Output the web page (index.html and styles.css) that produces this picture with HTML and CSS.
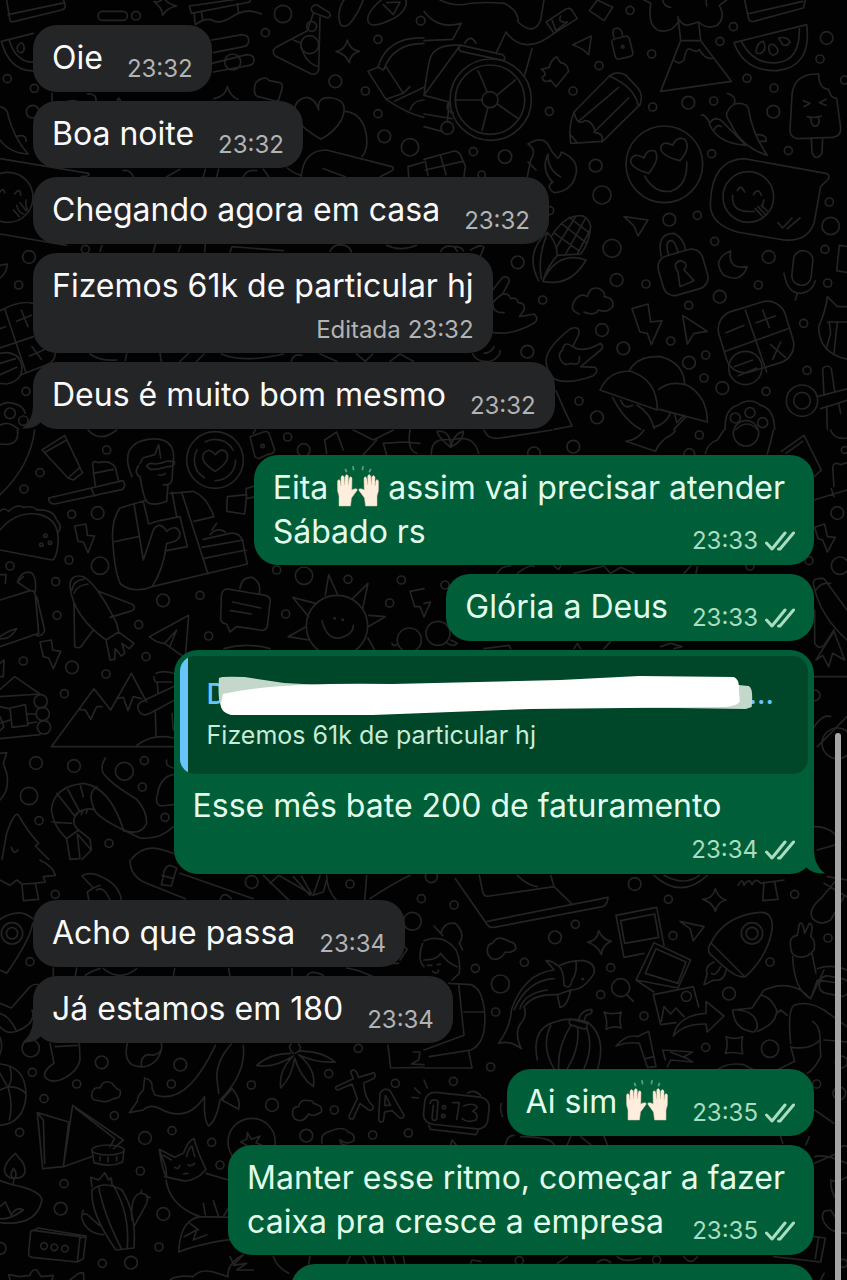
FILE: index.html
```html
<!DOCTYPE html>
<html lang="pt-BR">
<head>
    <meta charset="UTF-8">
    <meta name="viewport" content="width=device-width, initial-scale=1.0">
    <title>Conversa</title>
    <link rel="stylesheet" href="styles.css">
</head>
<body>

    <!-- shared icons -->
    <svg class="defs" aria-hidden="true">
        <symbol id="ticks" viewBox="0 0 30 20">
            <path d="M1.500 12 L7 18 L20 2 M13.500 18 L15 18 L28.500 2" fill="none" stroke="currentColor" stroke-width="3" stroke-linecap="round" stroke-linejoin="round"/>
        </symbol>
        <symbol id="hands" viewBox="0 0 42 42">
            <g id="hand" fill="#fdeedd" stroke="#e3c4a4" stroke-width=".5">
                <path d="M2 41 L2 31 Q0 26 .5 21 L.5 16 Q2 13 3.300 16 L4 21 L4 12 Q5.500 9 7.200 12 L7.600 20 L8.200 11 Q10 8 11.300 11 L11.300 20 L12.300 13 Q14 10.500 15 13 L14.800 25 L17 24 Q21 23 20 25.500 L14.500 33 L13.500 41 Z"/>
            </g>
            <use href="#hand" transform="matrix(-1 0 0 1 42 0)"/>
            <path d="M8.500 4.500 l1 2 M16 2 l.5 2.500 M26 2 l-.5 2.500 M33.500 4.500 l-1 2" stroke="#5c9a7c" stroke-width="1.800" stroke-linecap="round"/>
        </symbol>
        <symbol id="tail" viewBox="0 0 24 26">
            <path d="M11 0 C11 12 8 19 0 25.500 C7 26 14 24 18 20 L24 12 Z" fill="currentColor"/>
        </symbol>
    </svg>

    <!-- doodle wallpaper -->
    <svg class="wallpaper" viewBox="0 0 847 1280" preserveAspectRatio="xMidYMin slice" aria-hidden="true">
        <!-- top left -->
        <g transform="scale(.33333)">
            <path d="M20 0 L30 62 Q34 68 44 64 L185 30 Q200 26 194 10 L190 0 M24 44 L194 8"/>
            <rect x="294" y="34" width="88" height="27" rx="13"/>
            <path d="M462 5 Q484 10 490 -10 Q500 12 530 18 Q500 24 488 46 Q486 22 462 5 Z"/>
            <path d="M568 18 L750 -8 L750 6 L574 40 Z M582 38 L586 74 M604 34 L608 62 M712 10 L716 40 M586 74 Q620 50 640 62 T700 48 T784 42"/>
            <path d="M936 22 Q944 10 956 18 L988 38 Q996 48 984 54 L940 38 Q930 30 936 22 Z M940 40 L922 92 L828 142 Q812 152 826 168 L934 222 Q952 226 956 208 L960 52 M880 120 L904 130 M904 140 Q916 190 956 200"/>
            <circle cx="935" cy="79" r="15"/><circle cx="929" cy="134" r="27"/>
            <path d="M1018 62 Q1012 20 1040 -10 M1090 0 Q1070 50 1046 74 Q1022 88 1018 62 M1105 66 Q1094 40 1150 -6 M1105 66 Q1116 90 1190 50 Q1224 26 1218 0 M1160 8 L1200 6 L1180 44 L1150 14"/>
            <path d="M1008 154 Q1034 152 1042 120 Q1050 150 1078 154 Q1050 162 1048 188 Q1038 162 1008 154 Z"/>
            <path d="M1134 202 Q1160 110 1272 114 M1152 206 Q1180 130 1272 130 M1104 214 L1134 202 L1150 210 L1158 200 L1210 280 M1104 214 L1158 298 L1210 280 L1230 260 M1158 298 Q1220 340 1272 352 M1230 330 Q1240 300 1272 300 M1184 304 L1272 262"/>
            <path d="M4 124 L100 100 M4 124 Q30 220 110 212 M28 122 Q50 190 104 186"/>
            <path d="M52 140 Q62 124 68 130 Q78 146 66 158 Q48 158 52 140 Z"/>
            <path d="M636 120 L726 104 Q748 106 746 124 Q744 138 730 140 L640 158 M636 190 L740 164 Q762 164 762 180 Q762 194 748 196 L640 216"/>
            <circle cx="698" cy="186" r="24"/>
            <path d="M766 250 Q776 238 786 236 Q800 230 808 242 L840 248 Q850 252 846 266 L836 300 Q826 306 816 300 L774 290 Q758 286 766 250 Z"/>
            <path d="M642 296 Q676 290 682 260 Q692 290 714 298 M156 280 L156 306 M190 306 L220 302 L250 308 M350 306 L356 294 L364 306 M262 282 Q290 280 288 302"/>
            <path d="M956 330 Q950 286 998 294 Q1050 304 1024 360 Q1004 396 962 418 Q900 380 884 350 Q876 300 920 292 Q946 296 956 330 Z"/>
            <path d="M1036 334 Q1090 340 1100 410 Q1104 450 1086 470 M904 530 Q910 450 980 450 L1176 500 Q1184 506 1176 512 L1140 530 M970 506 L1036 530 M862 504 Q880 520 904 526 M1226 530 L1224 500 L1272 486"/>
            <path d="M0 320 Q24 326 24 346 Q40 410 84 462 Q30 460 0 420 M48 410 Q80 400 78 424"/>
            <path d="M0 476 L266 520 Q270 524 262 528 L244 530 M0 576 Q10 560 14 578 M44 582 Q60 560 62 586 M50 616 Q56 640 72 642 M60 608 L78 632 M40 630 Q50 640 58 650 M78 600 Q76 620 82 630 M0 702 L200 736"/>
            <circle cx="24" cy="592" r="75"/>
            <path d="M0 796 L22 792 Q20 820 0 834 M0 932 Q60 900 98 910 M14 926 L78 1118 M0 986 L16 980 M0 1044 L100 1010 M50 964 L94 946 M64 930 L84 980 M88 1068 L136 1048 M96 1040 L124 1078 M64 1124 L140 1094 Q164 1086 166 1060"/>
            <path d="M0 1060 Q50 1050 64 1090 Q74 1140 20 1152 L0 1150 M0 1090 L46 1076 M0 1124 L50 1102"/>
            <path d="M300 754 L306 736 M460 756 L466 734 M536 754 L542 736 M616 734 L614 756 M690 756 L696 740 L850 752 M990 754 Q1000 734 1020 734 Q1050 736 1054 756 M1160 736 Q1200 756 1250 736 M500 530 L540 508 M370 512 Q390 508 400 530 M610 530 L616 508 M650 530 L656 508 M730 530 Q740 508 770 512 M790 508 L806 530"/>
            <path d="M270 1062 Q300 1084 350 1080 M380 1062 L376 1082 M480 1060 L484 1084 M540 1084 L566 1060 M590 1084 L612 1062 M664 1062 Q730 1090 850 1062 M874 1084 Q880 1060 906 1066 M960 1062 L1010 1084 M1070 1062 L1096 1084 L1118 1062 M1170 1084 L1200 1062 L1240 1084"/>
            <circle cx="408" cy="47" r="13"/><circle cx="849" cy="42" r="26"/><circle cx="796" cy="98" r="12"/><circle cx="1134" cy="118" r="12"/><circle cx="1006" cy="244" r="19"/><circle cx="1096" cy="273" r="12"/><circle cx="1134" cy="341" r="12"/><circle cx="1153" cy="409" r="19"/><circle cx="1230" cy="442" r="26"/><circle cx="22" cy="236" r="12"/><circle cx="103" cy="265" r="12"/><circle cx="98" cy="335" r="19"/><circle cx="87" cy="771" r="19"/><circle cx="256" cy="748" r="12"/><circle cx="56" cy="855" r="12"/><circle cx="78" cy="1174" r="12"/><circle cx="30" cy="1240" r="16"/><circle cx="70" cy="1262" r="14"/><circle cx="1262" cy="62" r="13"/>
            <path d="M0 1216 Q16 1204 40 1210 Q70 1216 76 1240 M0 1276 Q24 1260 56 1288"/>
        </g>

        <!-- top right -->
        <g transform="translate(424) scale(.33333)">
            <path d="M0 34 Q40 90 112 70 L86 118 L0 122 M48 0 Q90 20 130 12 T240 10 Q284 30 282 66 Q330 110 350 60 L360 0 M366 66 L428 26 Q440 22 446 34 L460 56 L390 100 Z M384 60 L396 92 L430 66 Q400 70 410 48"/>
            <path d="M216 160 L246 96 Q300 170 390 100 M324 146 L302 226 M0 286 Q10 200 20 170 Q40 130 112 136 L236 164 Q246 172 240 182 L110 154 Q100 146 110 134 Z M122 130 Q140 100 156 130"/>
            <circle cx="200" cy="299" r="122"/><circle cx="198" cy="299" r="104"/><circle cx="198" cy="299" r="24"/>
            <path d="M162 212 L190 276 M274 240 L218 286 M94 300 L174 300 M280 354 L220 312 M174 392 L192 322 M0 286 L76 306 L70 364 M0 342 L84 356 M0 380 L54 394 M74 306 Q60 330 88 340"/>
            <circle cx="70" cy="384" r="19"/>
            <path d="M520 0 L566 22 L540 62 L496 32 Z M446 134 L502 108 L494 164 Q480 146 446 134 Z"/>
            <rect x="568" y="112" width="54" height="62" rx="10" transform="rotate(-14 595 143)"/>
            <path d="M570 112 Q560 84 580 84 Q594 86 596 108"/><circle cx="596" cy="140" r="4"/>
            <path d="M352 208 L376 202 Q380 180 398 170 L410 188 Q430 190 434 214 L396 260 L380 240 Q360 252 354 232 Q374 222 352 208 Z"/>
            <path d="M450 336 L556 228 Q580 210 606 226 L640 262 Q660 286 648 314 L536 424 L440 430 Q432 380 450 336 Z M556 228 Q630 260 642 314 M584 262 L466 362 M614 294 L510 396 M450 336 Q460 380 482 362 Q506 360 514 398 Q540 400 534 424 M438 404 Q454 420 460 430"/>
            <path d="M660 0 L680 10 Q670 80 706 92 Q746 100 766 60 Q780 80 796 74 L824 66 Q850 90 880 76 Q906 50 886 16 L908 0 M716 0 Q720 20 740 22 M846 0 L848 18 M762 50 L770 122 L830 122 L824 66 M770 122 L710 274 L922 244 L830 122 M752 182 Q764 196 780 180 Q786 140 800 148 Q820 160 826 148 Q840 176 864 176"/>
            <path d="M962 0 L974 58 Q978 66 990 64 L1138 24 L1144 0 M970 42 L1136 4"/>
            <path d="M930 128 L1148 74 Q1164 200 1060 212 Q960 214 930 128 Z M952 124 Q990 196 1060 188 Q1130 180 1126 80 M996 154 Q1000 126 1018 124 Q1030 150 1010 160 Q996 162 996 154 Z M1036 136 Q1030 158 1048 166 Q1066 160 1060 146 Q1048 126 1036 136 Z M1064 114 Q1090 108 1098 126 Q1090 140 1076 134 Z"/>
            <path d="M1184 222 Q1110 220 1104 284 L1098 390 Q1098 412 1120 416 L1226 412 Q1252 408 1250 384 L1238 294 Q1220 296 1214 268 Q1184 266 1184 222 Z M1162 418 L1164 458 Q1176 486 1194 460 L1196 418 M1138 302 L1158 310 L1140 320 M1206 298 L1186 308 L1206 316 M1150 350 Q1170 356 1192 348 M1160 354 Q1162 382 1178 378 Q1188 372 1184 352"/>
            <path d="M930 312 Q940 290 910 280 M908 340 Q920 310 944 310 Q970 310 974 328 Q984 400 1030 466 Q950 440 920 370 Q906 350 908 340 Z M856 366 Q840 340 832 346 M856 372 Q866 350 890 360 Q910 380 966 436 Q880 430 856 372 Z M870 390 Q880 370 892 380 M1000 404 Q1030 404 1026 424 L1004 424"/>
            <circle cx="721" cy="493" r="115"/>
            <path d="M674 520 Q620 504 620 482 Q628 454 660 474 Q670 444 694 454 Q708 480 674 520 Z M768 482 Q712 468 710 444 Q714 420 746 436 Q756 408 782 418 Q802 444 768 482 Z M662 528 Q690 580 740 574 Q792 556 788 486"/>
            <path d="M312 432 Q350 408 370 430 Q382 456 400 474 Q408 474 412 456 Q470 480 454 530 Q440 574 390 578 Q364 560 386 546 Q350 510 372 462 Q370 510 410 530 M312 432 Q340 450 320 480 L310 530 M312 486 L336 510"/>
            <path d="M0 478 L80 456 Q100 448 110 466 L124 498 L120 530 M50 468 L66 524 M4 510 L116 484 M4 484 L12 526"/>
            <path d="M960 476 L1206 520 Q1222 526 1210 540 L1190 560 L1170 670 Q1150 726 1080 720 L940 696 Q850 670 860 600 Q866 480 960 476 Z M940 572 Q950 550 962 576 M988 584 Q1004 560 1012 586 M926 586 Q920 640 990 634 M1020 600 L1014 620 M994 626 L1016 650 M1002 620 L1024 644 M1012 616 L1032 636 M1062 668 L1076 684 L1104 654 M1090 686 L1128 654"/>
            <circle cx="973" cy="591" r="76"/>
            <path d="M344 842 Q300 760 370 696 Q400 730 400 766 Q370 800 356 844 Q440 862 486 780 Q400 750 356 844 M370 700 Q340 770 352 836 M400 766 L470 762 Q496 730 500 680 Q490 640 460 648 Q420 650 384 706 M392 700 L464 752 M412 670 L486 728 M436 652 L498 700 M456 648 L396 744 M484 656 L426 760 M498 690 L460 762"/>
            <path d="M600 650 L672 660 L642 708 L630 678 Z M712 770 Q696 700 750 700 Q780 716 784 748 M734 764 Q720 720 744 722 Q754 726 762 756"/>
            <rect x="708" y="756" width="138" height="122" rx="34" transform="rotate(-16 777 817)"/>
            <path d="M762 816 L768 860 L810 842 L780 810 Q796 788 768 782 Q744 790 762 816 Z M920 752 Q860 780 900 826 Q950 852 970 800 Q910 810 920 752 Z"/>
            <rect x="1106" y="752" width="58" height="104" rx="28" transform="rotate(6 1135 804)"/>
            <path d="M1080 820 Q1090 880 1130 880 Q1166 876 1174 842 M1120 880 L1114 900 M1272 740 L1246 736 L1238 812 L1272 818"/>
            <path d="M1210 890 L1240 920 L1272 920 M1210 890 Q1206 930 1184 980 Q1184 1060 1272 1078 M1210 966 L1272 966 M1216 970 L1220 1000 L1208 1040 M1240 966 L1230 1060"/>
            <path d="M50 754 Q60 734 90 740 Q110 738 118 752 M90 740 L100 754 M140 750 Q170 730 180 742 L170 766 M206 870 L236 832 Q256 826 256 844 L236 882 Q210 900 206 910 Q206 940 240 938 M236 882 Q256 880 260 896 Q280 890 282 908 Q306 908 300 930 L286 950 L330 942 Q346 956 332 968 Q260 1010 200 996"/>
            <path d="M466 942 Q430 930 456 896 Q472 878 490 890 Q500 854 530 868 Q546 880 540 890 Q572 894 566 920 Q550 940 524 930 Q510 950 480 936"/>
            <path d="M624 926 L672 912 L680 966 L714 962 L682 1034 L670 1000 L648 996 Z M776 946 L850 994 L810 1000 L790 1032 Z"/>
            <path d="M366 1080 Q370 1040 440 986 Q470 976 464 1004 L446 1040 Q480 1060 530 1030 Q542 1040 530 1050 L470 1100 L514 1102 Q526 1116 506 1128 Q430 1156 390 1136 Q366 1110 366 1080 Z M446 1040 Q420 1020 416 1050 Q400 1060 410 1080 Q420 1100 440 1090 Q470 1100 466 1070"/>
            <rect x="892" y="916" width="208" height="190" rx="56" transform="rotate(-17 996 1011)"/>
            <path d="M964 930 L1028 1116 M904 1054 L1092 986 M906 998 L960 976 M996 968 L1054 948 M1016 930 L1036 982 M1040 1034 L1084 1072 M1046 1078 L1070 1026"/>
            <circle cx="964" cy="1104" r="50"/><path d="M930 1100 L986 1080 M942 1128 L998 1104"/>
            <path d="M528 1170 Q556 1110 620 1114 Q700 1140 700 1230 Z M616 1112 Q640 1066 710 1070 Q780 1090 782 1152 M704 1168 Q740 1140 790 1156 Q850 1190 850 1266 L706 1228 M566 1192 Q600 1260 650 1288 M590 1200 Q600 1230 626 1216 M640 1216 Q680 1240 690 1286 M740 1236 Q730 1270 690 1282 M786 1250 L750 1288 M752 1240 L758 1268 L780 1246"/>
            <path d="M904 1288 Q900 1230 940 1216 Q980 1190 1010 1216 Q1050 1226 1052 1288 M936 1288 Q970 1256 1000 1288"/>
            <circle cx="934" cy="1254" r="15"/><circle cx="978" cy="1238" r="15"/><circle cx="1016" cy="1268" r="15"/>
            <circle cx="1134" cy="1202" r="47"/><circle cx="1134" cy="1202" r="25"/>
            <path d="M1180 1190 L1272 1166 M1190 1226 L1272 1200 M1200 1186 L1196 1106 Q1210 1090 1222 1106 L1232 1176 M1208 1220 L1210 1288 M1244 1210 L1250 1240 M396 1172 Q420 1230 444 1278 L390 1288 M146 1062 Q160 1090 200 1084 Q230 1070 228 1052 M180 1060 Q200 1060 210 1040"/>
            <circle cx="618" cy="31" r="12"/><circle cx="683" cy="162" r="12"/><circle cx="525" cy="197" r="12"/><circle cx="447" cy="273" r="12"/><circle cx="376" cy="334" r="12"/><circle cx="148" cy="455" r="12"/><circle cx="243" cy="470" r="20"/><circle cx="173" cy="524" r="11"/><circle cx="515" cy="497" r="19"/><circle cx="534" cy="585" r="27"/><circle cx="686" cy="321" r="12"/><circle cx="793" cy="308" r="19"/><circle cx="869" cy="303" r="12"/><circle cx="928" cy="80" r="12"/><circle cx="888" cy="124" r="12"/><circle cx="969" cy="235" r="12"/><circle cx="1050" cy="264" r="12"/><circle cx="1048" cy="335" r="19"/><circle cx="1208" cy="114" r="19"/><circle cx="1188" cy="177" r="12"/><circle cx="1093" cy="452" r="12"/><circle cx="863" cy="461" r="12"/><circle cx="1262" cy="240" r="12"/><circle cx="1216" cy="606" r="12"/><circle cx="1220" cy="678" r="26"/><circle cx="1203" cy="748" r="12"/><circle cx="1034" cy="771" r="19"/><circle cx="872" cy="724" r="12"/><circle cx="820" cy="646" r="12"/><circle cx="736" cy="659" r="19"/><circle cx="564" cy="745" r="27"/><circle cx="377" cy="632" r="12"/><circle cx="281" cy="787" r="19"/><circle cx="578" cy="840" r="19"/><circle cx="666" cy="852" r="12"/><circle cx="356" cy="900" r="12"/><circle cx="534" cy="990" r="19"/><circle cx="598" cy="1045" r="19"/><circle cx="310" cy="1055" r="19"/><circle cx="794" cy="916" r="12"/><circle cx="887" cy="890" r="19"/><circle cx="1003" cy="855" r="12"/><circle cx="1211" cy="849" r="12"/><circle cx="740" cy="1023" r="12"/><circle cx="795" cy="1088" r="19"/><circle cx="845" cy="1065" r="12"/><circle cx="840" cy="1134" r="12"/><circle cx="895" cy="1164" r="19"/><circle cx="1026" cy="1174" r="12"/><circle cx="1149" cy="1111" r="12"/><circle cx="1139" cy="970" r="12"/><circle cx="465" cy="1203" r="12"/><circle cx="519" cy="1252" r="19"/>
        </g>

        <!-- middle left -->
        <g transform="translate(0 430) scale(.33333)">
            <path d="M0 42 Q60 50 52 0 M104 0 Q90 110 0 194 M264 0 Q300 40 350 0 M126 60 L194 16 L240 112 L204 144 Z M136 66 L200 30 M204 144 L220 150 L248 128 L238 112"/>
            <path d="M146 204 L368 152 Q380 164 368 178 L164 222 Q146 222 146 204 Z M274 176 L284 198 M286 168 L278 104 Q276 90 296 98 Q330 90 346 112 L356 154 M280 130 L340 118"/>
            <path d="M396 140 Q360 60 420 34 Q490 14 514 50 Q524 70 520 90 L516 150 Q510 168 490 164 M416 106 Q400 130 420 140 Q430 200 440 216 Q460 230 500 214 L504 166 M420 100 L428 84 L464 74 L476 44 L482 84 M440 108 Q446 96 466 102 L490 98 Q500 90 524 96 Q524 112 500 110 Q470 120 450 118 Z M476 134 Q488 138 496 130"/>
            <path d="M440 210 L360 234 Q334 270 338 330 Q344 430 362 462 Q400 492 456 470 L742 402 L728 334 Q720 306 690 310 L610 328 M510 190 L580 184 Q620 200 642 260 L582 274 M338 336 L416 320 M402 222 L430 390 L460 300 Q480 270 500 304 Q530 280 540 310 Q540 336 500 340 Q490 420 456 470 M480 272 L540 260 L562 350 L500 362 M516 186 L530 260 M430 214 L446 282 L484 270 M546 190 L624 432 M606 352 L730 330 M608 386 L738 360 M630 314 Q650 290 676 306 M636 300 L650 280"/>
            <circle cx="645" cy="90" r="85"/><circle cx="645" cy="90" r="62" stroke-dasharray="96 34"/>
            <path d="M645 124 Q600 96 610 72 Q626 50 646 74 Q668 48 682 72 Q688 98 645 124 Z"/>
            <path d="M750 20 L790 6 Q806 0 810 18 L824 60 Q820 74 800 74 L776 86 Q764 84 762 70 Z M760 10 L766 0 M980 70 L974 30 L1010 6 L1030 60 M1060 0 L1120 30 L1180 0 M1160 74 L1150 40 L1210 36 L1260 40 M1090 74 L1130 30 M1230 0 Q1220 60 1250 70"/><circle cx="788" cy="48" r="5"/>
            <path d="M738 176 L772 166 M738 176 L740 206 L766 200 M682 200 L740 194 L734 252 L680 244 Z"/>
            <path d="M0 300 Q50 240 120 254 Q180 270 174 340 Q170 386 156 390 L0 360 M0 244 Q10 230 26 244 Q50 220 70 232 Q100 226 110 240 Q160 236 170 270 Q190 290 172 310"/>
            <circle cx="136" cy="317" r="5"/><circle cx="124" cy="344" r="5"/><circle cx="150" cy="338" r="5"/>
            <path d="M224 288 L258 282 L262 316 L284 318 L264 368 L250 336 L234 334 Z M120 636 L154 630 L158 660 L182 664 L160 716 L146 684 L130 680 Z"/>
            <path d="M0 434 L18 434 L16 460 M0 510 L90 482 Q104 480 106 496 L116 610 L0 650 M90 482 L52 456 Q66 420 94 428 Q110 440 106 484 M110 500 L134 600 Q130 620 110 616 M52 456 L70 440 M0 626 Q30 630 50 596 Q30 600 0 620"/>
            <path d="M210 470 Q210 430 250 440 Q290 460 350 580 L356 606 L318 630 Q220 560 210 470 Z M216 480 Q220 450 252 448 M222 490 Q230 466 264 462 M296 484 L400 524 Q410 540 390 544 L330 562 M222 520 L224 650 Q240 660 250 640 L280 600 M318 630 L330 690 L344 688 L346 656 L364 678 L374 670 L366 640 L388 656 L402 640 L356 606"/>
            <path d="M448 620 L566 556 L556 684 L494 640 Q470 640 448 620 Z M494 640 L530 600 L510 648 M664 516 Q660 470 690 478 L796 496 Q814 500 810 520 L802 590 Q796 604 780 600 L710 590 L690 606 L680 582 Q660 580 662 560 Z M720 476 Q724 440 756 442 Q784 456 778 490 M698 516 L782 534 M692 542 L754 552"/>
            <circle cx="1011" cy="588" r="92"/>
            <path d="M976 496 L986 434 L1012 492 M1058 506 L1104 460 L1088 536 M1106 556 L1156 560 L1104 590 M1104 624 L1124 660 M946 520 L878 502 L926 560 M918 590 L864 620 L926 630 M966 572 Q980 630 1020 624 Q1060 614 1060 586"/>
            <circle cx="1004" cy="565" r="2"/><circle cx="1028" cy="569" r="2"/><circle cx="1228" cy="630" r="36"/>
            <path d="M1230 484 L1272 476 M1230 484 L1244 530 L1260 530 L1272 560 M1176 640 Q1180 650 1190 644 M672 656 Q740 636 810 656"/>
            <path d="M0 700 L12 690 L10 740 L0 740 M0 778 L44 740 L120 792 L0 800 M30 834 L76 824 L84 886 L36 892 Z M0 830 L26 836 M80 852 L104 852 M0 880 L30 870 M84 880 L110 876 M0 926 L120 914 M0 902 L12 890 L0 860"/>
            <circle cx="122" cy="814" r="20"/><circle cx="128" cy="852" r="20"/><circle cx="132" cy="892" r="20"/>
            <path d="M154 950 L282 776 L332 840 L394 730 L440 816 M154 950 L520 950 M236 838 L256 840 L272 868 L290 830 L306 830 M350 806 L370 802 L384 842 L400 800 L424 806 M410 946 Q460 910 520 924 M468 918 L466 846 M516 850 L520 900 M414 836 Q410 820 430 812 L520 770 M414 836 Q424 864 450 850 L520 812 M468 730 Q490 720 520 730 M468 756 L516 756 M472 760 L474 790 M462 740 Q462 756 472 758"/>
            <path d="M0 970 L20 968 L10 1000 L20 1030 Q30 1080 0 1110 M316 984 Q300 1010 310 1030 Q330 1060 410 1108 Q440 1140 440 1180 Q420 1220 370 1200 Q290 1160 284 1140 M520 1190 Q480 1230 420 1224 L370 1200"/>
            <path d="M372 1204 Q330 1070 250 1060 Q160 1070 154 1140 Q160 1190 200 1226 L236 1200 Q210 1180 230 1150 Q260 1130 284 1140 M170 1090 L226 1160 M200 1072 L240 1146 M240 1062 L250 1100 M290 1070 Q260 1090 284 1140 M156 1176 L214 1180 M200 1226 L210 1288 L240 1286 L232 1212 L274 1260 L246 1288 M236 1200 L270 1228 L274 1260 M236 1146 L228 1156 M248 1142 L244 1154 M262 1140 L258 1150"/>
            <path d="M472 1096 Q480 1040 520 1034 M470 1100 Q466 1126 486 1128 L520 1124 M500 990 Q496 1010 520 1014 M6 1288 L20 1210 Q44 1140 56 1156 Q80 1200 116 1240 L106 1248 L146 1288 M34 1252 Q42 1276 54 1260 M394 1288 Q430 1240 490 1260 L520 1270"/>
            <circle cx="320" cy="60" r="12"/><circle cx="120" cy="128" r="12"/><circle cx="72" cy="177" r="12"/><circle cx="215" cy="253" r="12"/><circle cx="293" cy="249" r="19"/><circle cx="207" cy="390" r="12"/><circle cx="300" cy="407" r="26"/><circle cx="30" cy="408" r="12"/><circle cx="167" cy="455" r="12"/><circle cx="171" cy="556" r="12"/><circle cx="489" cy="511" r="19"/><circle cx="600" cy="496" r="12"/><circle cx="416" cy="584" r="12"/><circle cx="626" cy="618" r="12"/><circle cx="438" cy="680" r="12"/><circle cx="216" cy="712" r="19"/><circle cx="70" cy="693" r="12"/><circle cx="318" cy="732" r="12"/><circle cx="193" cy="791" r="12"/><circle cx="108" cy="999" r="19"/><circle cx="222" cy="1008" r="19"/><circle cx="373" cy="1024" r="27"/><circle cx="433" cy="992" r="12"/><circle cx="427" cy="1071" r="12"/><circle cx="87" cy="1098" r="26"/><circle cx="117" cy="1172" r="12"/><circle cx="495" cy="1162" r="12"/><circle cx="327" cy="1240" r="12"/><circle cx="863" cy="21" r="12"/><circle cx="911" cy="60" r="19"/><circle cx="830" cy="420" r="12"/><circle cx="912" cy="437" r="26"/><circle cx="1044" cy="448" r="12"/><circle cx="1204" cy="450" r="12"/><circle cx="1169" cy="519" r="12"/><circle cx="857" cy="552" r="12"/>
        </g>

        <!-- middle right -->
        <g transform="translate(424 430) scale(.33333)">
            <path d="M22 74 Q20 20 80 30 Q150 10 164 70 M80 52 Q40 20 40 4 Q80 0 80 52 Q90 10 118 4 Q120 30 80 52 M180 0 Q190 30 230 24 L384 0 M606 34 Q640 30 660 0 M606 34 L694 64 Q710 30 740 16 Q760 0 750 0 M844 70 Q850 40 880 30 L900 0 M1048 0 Q1040 40 1030 72 M1072 64 L1140 16 L1192 120 L1160 150 M1086 70 L1136 34 M1220 0 Q1230 30 1269 24"/>
            <circle cx="966" cy="10" r="38"/>
            <path d="M1170 210 L1269 180 M1222 176 L1230 200 M1230 170 L1226 110 Q1230 94 1250 104 L1269 98 M1172 292 L1202 282 L1210 320 L1234 322 L1210 366 L1196 330 L1182 326 Z M1170 470 Q1160 440 1200 446 L1269 540 M1170 470 Q1190 560 1269 630 M1172 540 L1172 640 Q1184 660 1200 646 L1230 600 M1176 480 Q1190 456 1220 460"/>
            <path d="M220 430 Q230 408 260 408 M280 430 Q320 400 330 410 M390 408 L404 418 L410 408 M450 430 L540 408 L560 430 L590 412 L630 430 M780 430 L800 408 M820 410 L816 430 M0 520 L20 516 L0 560 M80 630 L100 640 Q90 652 70 640 M180 656 L256 646 L260 656 M450 656 L460 640 L470 656 M540 656 L560 634 M710 650 L740 640 L774 650 L750 656"/>
            <circle cx="42" cy="610" r="36"/><circle cx="63" cy="465" r="12"/><circle cx="448" cy="50" r="19"/><circle cx="330" cy="70" r="19"/><circle cx="826" cy="15" r="12"/><circle cx="796" cy="72" r="16"/><circle cx="1240" cy="249" r="19"/><circle cx="1155" cy="392" r="12"/><circle cx="1248" cy="407" r="26"/><circle cx="978" cy="408" r="12"/><circle cx="1262" cy="60" r="10"/>
            <path d="M1176 690 L1230 604 L1262 690 L1226 670 L1214 710 L1196 676 Z M1172 740 L1269 740 M1160 910 Q1190 850 1220 860 M1180 950 L1269 860 M1170 1190 Q1230 1190 1250 1240 L1180 1260"/>
            <circle cx="1172" cy="796" r="16"/><circle cx="1240" cy="940" r="46"/>
        </g>

        <!-- bottom left -->
        <g transform="translate(0 860) scale(.33333)">
            <path d="M0 60 L30 76 L50 60 L66 72 L100 70 L136 66 L130 50 L166 46 Q160 20 120 0 M66 72 L70 122 L116 118 L106 70 M246 48 Q260 36 290 44 Q360 70 364 122 M246 48 L280 84 L262 96 L266 118 M290 90 Q310 76 330 120 M280 84 L300 76"/>
            <path d="M390 0 Q390 50 440 70 L556 116 M540 40 L760 116 M490 50 Q490 20 510 16 L530 24 L514 78 L484 74 Z M486 46 L520 56 M660 120 Q670 90 694 116 M790 46 L870 124 M810 70 L836 46 L940 106 L960 46 M880 50 L930 106 M904 48 L936 104 M980 46 Q980 90 1010 122 M1094 120 L1100 46 M1110 116 Q1180 70 1230 46 M940 106 L970 96 L980 60"/>
            <path d="M0 178 Q60 140 98 176 M98 190 Q90 240 20 340 L0 330"/><circle cx="36" cy="220" r="32"/><circle cx="36" cy="220" r="17"/>
            <path d="M1200 300 L1222 268 L1204 250 M1176 310 L1196 310 M1268 250 Q1250 300 1272 320 M160 324 L160 350 M230 324 L226 350 M256 346 Q280 330 300 326 M310 326 Q360 366 410 326 M524 326 L520 350 M686 326 L690 350 M876 326 L876 350 M920 350 Q930 326 970 346 M1040 324 L1076 332 L1120 350"/>
            <path d="M0 430 L34 444 L90 380 Q104 370 114 374 M0 460 Q30 470 50 514 Q20 524 0 500 M50 514 Q110 490 96 450 M0 532 Q10 560 0 582"/><circle cx="92" cy="565" r="26"/>
            <path d="M150 550 L162 610 Q130 630 134 650 Q150 670 180 660 Q230 640 240 600 L238 550 M166 560 L232 556 M382 550 Q370 600 400 616 Q440 630 470 600 Q490 570 484 550 M424 618 Q420 590 444 584 Q470 590 484 570"/>
            <path d="M646 556 Q560 740 464 704 L456 684 Q460 660 434 654 L430 690 Q410 710 412 724 L388 758 L430 750 Q450 730 480 746 Q560 790 614 710 Q610 780 626 798 Q650 780 660 720 Q740 640 730 556 M694 552 Q650 600 650 650 L656 700 M696 686 L666 720 L716 748 Q724 716 696 686 Z"/>
            <path d="M880 580 Q860 560 874 552 M896 552 Q910 570 886 580 M872 580 Q810 580 770 616 Q820 626 880 588 Q836 630 842 684 Q876 650 884 594 Q900 650 940 680 Q950 630 896 584 Q950 610 1006 606 Q960 570 894 574"/>
            <path d="M1008 680 L1060 656 L1052 636 Q1058 624 1068 634 L1076 652 L1122 638 Q1130 648 1120 656 L1092 668 Q1090 710 1120 740 Q1120 754 1106 750 L1080 730 L1060 776 Q1046 780 1048 766 L1072 716 L1056 672 L1014 690 Q1004 688 1008 680 Z M1136 776 L1140 700 Q1150 680 1170 692 L1212 766 Q1212 776 1200 774 L1176 752 L1154 756 L1150 784 Q1136 790 1136 776 Z M1154 736 L1156 706 L1172 736 Z M1164 556 L1172 624 L1272 622 M1240 576 L1260 576 L1256 600 L1234 612 L1272 614 M1236 712 L1256 714 M1244 684 L1260 700"/>
            <path d="M0 612 Q80 620 78 710 Q70 790 0 796 M30 622 Q40 660 24 680 L0 690 M24 680 Q60 680 76 700 M24 680 Q40 730 28 780 M0 640 L20 676"/>
            <path d="M112 758 L206 786 L190 920 L128 926 Z M112 758 L130 780 L134 910 M218 736 L370 840 L340 866 M218 736 L190 920 L280 888 M226 744 L344 836 L330 860"/>
            <ellipse cx="324" cy="870" rx="48" ry="15"/><path d="M276 872 L282 908 Q330 924 368 906 L372 870 M300 890 L300 902 M324 892 L324 906 M350 890 L350 902"/>
            <path d="M276 700 Q280 680 300 684 Q310 656 336 670 Q350 690 360 690 Q366 716 340 716 Q320 730 300 722 Q270 724 276 700 Z M878 754 Q880 740 896 740 Q900 716 924 722 Q940 720 940 730 Q970 736 964 756 Q940 772 926 762 Q910 790 886 778 Q876 770 878 754 Z M966 850 Q960 820 990 814 Q1030 796 1044 816 Q1066 820 1062 842 Q1040 856 1020 840 Q1020 856 1040 856"/>
            <circle cx="755" cy="846" r="71"/><path d="M742 818 L754 838 L780 828 L768 848 L786 856 M742 818 L740 838 L722 846 L740 856"/>
            <path d="M478 868 Q486 930 500 952 L498 924 L478 868 L524 892 L550 880 Q566 840 582 836 Q590 870 618 928 L600 946 Q570 966 548 962 L494 950 M560 890 Q566 862 576 858 L584 890 M490 886 L514 900 M524 922 Q536 930 540 916 M564 914 Q572 922 584 910 M550 942 L564 940 M498 960 Q510 1040 600 1070 L706 1072 M618 940 L706 966 M610 1030 L616 1064 M640 1022 L656 1070 M700 1020 L670 1070 M600 1070 Q540 1080 536 1176 Q600 1150 710 1136 M552 1130 L590 1110 L580 1140 L620 1124 M570 1090 L596 1110"/>
            <path d="M46 880 Q-10 930 30 954 Q90 960 70 910 Z M40 926 Q24 950 44 956 Q54 940 40 926 M42 956 L40 970 M0 962 L36 974 Q120 990 126 1020 Q110 1100 0 1088 M0 1040 L16 1026 L36 1070 M0 1076 Q30 1080 70 1050 Q50 1040 36 1062"/>
            <path d="M276 980 L272 952 L296 960 L314 938 L326 960 L334 954 L336 974 M276 990 Q270 1060 348 1170 L402 1164 Q410 1060 366 990 Q310 960 276 990 Z M296 980 Q310 1060 364 1166 M340 976 Q390 1060 382 1164 M396 1080 Q390 1010 420 1000 Q450 1000 440 1030 L404 1096 M246 1076 Q240 1060 260 1062 L298 1096 M246 1076 Q260 1120 310 1124 M440 1010 L450 1012 M246 1060 L250 1050 M424 998 L424 990"/>
            <path d="M92 1114 Q96 1110 106 1112 L240 1130 L232 1206 L96 1192 Q84 1190 86 1178 Z M100 1112 L114 1104 L258 1128 L250 1196 L232 1206 M240 1134 L256 1130"/>
            <circle cx="132" cy="1158" r="10"/><circle cx="163" cy="1162" r="10"/><circle cx="195" cy="1166" r="10"/>
            <path d="M30 1260 L26 1244 L60 1250 L90 1246 Q96 1226 110 1230 L124 1250 L160 1246 L156 1260 M210 1260 L236 1240 L250 1238 L252 1260 M510 1260 Q530 1244 580 1250 Q600 1226 640 1236 L684 1250 M684 1250 Q680 1210 730 1184 L700 1216 L740 1210 L710 1230 L760 1230 M690 1190 L700 1210 M820 1190 Q830 1220 866 1240 M930 1190 L926 1212 M1040 1212 L1050 1190 M1090 1190 L1100 1210 M1120 1190 L1126 1210 M1150 1190 L1156 1212 M1180 1190 L1186 1210 M1210 1190 L1214 1210"/>
            <circle cx="166" cy="103" r="12"/><circle cx="755" cy="66" r="19"/><circle cx="1050" cy="72" r="12"/><circle cx="1264" cy="116" r="12"/><circle cx="1237" cy="184" r="27"/><circle cx="90" cy="305" r="12"/><circle cx="97" cy="637" r="12"/><circle cx="305" cy="607" r="19"/><circle cx="230" cy="672" r="12"/><circle cx="132" cy="716" r="12"/><circle cx="541" cy="614" r="19"/><circle cx="514" cy="672" r="12"/><circle cx="754" cy="675" r="12"/><circle cx="816" cy="735" r="19"/><circle cx="343" cy="767" r="12"/><circle cx="435" cy="834" r="19"/><circle cx="516" cy="812" r="12"/><circle cx="59" cy="817" r="12"/><circle cx="635" cy="847" r="12"/><circle cx="421" cy="933" r="12"/><circle cx="660" cy="915" r="12"/><circle cx="192" cy="971" r="12"/><circle cx="182" cy="1046" r="19"/><circle cx="490" cy="1062" r="19"/><circle cx="477" cy="1161" r="12"/><circle cx="393" cy="1208" r="19"/><circle cx="307" cy="1210" r="12"/><circle cx="0" cy="1165" r="18"/><circle cx="1075" cy="565" r="12"/><circle cx="986" cy="641" r="12"/><circle cx="1186" cy="670" r="12"/><circle cx="1003" cy="750" r="12"/><circle cx="919" cy="827" r="19"/><circle cx="1118" cy="825" r="12"/><circle cx="1225" cy="819" r="12"/>
        </g>

        <!-- bottom right -->
        <g transform="translate(424 860) scale(.33333)">
            <path d="M94 56 L190 194 Q196 204 210 202 L536 140 Q550 136 552 112 L190 184 M166 46 L176 96 Q180 112 196 108 L390 80 L442 130 M280 46 Q310 76 340 80 M390 80 L380 46 M690 46 Q770 120 850 46 M720 46 Q780 80 826 46"/>
            <path d="M836 118 Q868 116 874 86 Q880 112 906 120 Q880 126 874 154 Q866 126 836 118 Z M490 246 Q520 244 524 212 Q536 240 562 244 Q536 254 532 284 Q522 256 490 246 Z"/>
            <path d="M942 76 Q956 50 960 76 Q976 50 984 74 Q996 50 1010 70 L1080 60 M1020 66 L1016 122 L1062 118 L1052 66 M1232 66 L1190 116 Q1150 150 1166 176 Q1190 200 1220 180 L1260 110 M1200 70 L1269 110 M1210 50 L1269 60"/>
            <path d="M576 166 L698 142 L720 256 M576 166 L600 292 L660 280 M590 182 L692 162 L704 232 L602 250 Z M690 248 L800 300 L762 384 L636 360 Z M696 266 L786 306 L762 370 L664 340 Z M636 360 L690 396"/>
            <path d="M768 184 L840 200 L808 242 L798 206 Z M688 404 L808 380 L824 440 M688 404 L710 494 L756 488 M712 484 L720 440 L740 462 L756 444 L780 470"/><circle cx="787" cy="409" r="15"/>
            <path d="M748 528 Q760 466 846 460 L846 424 L900 468 L850 516 L846 492 Q780 490 748 528 Z M860 250 Q900 170 1000 158 Q1050 150 1044 210 Q1030 290 964 350 Q940 356 900 320 L856 280 Q850 264 860 250 Z M864 252 L960 348 M870 306 Q840 320 850 340 L840 374 L870 360 Q900 366 906 330 M862 340 Q876 350 890 320"/>
            <circle cx="984" cy="220" r="32"/><circle cx="984" cy="220" r="18"/>
            <path d="M1100 260 Q1094 230 1120 226 L1126 192 Q1136 180 1142 220 L1156 190 Q1170 190 1160 230 Q1176 240 1170 270 Q1150 296 1120 290 Q1100 284 1100 260 Z M1106 290 Q1110 390 1160 416 L1200 330 M1164 280 L1176 340 M1180 326 Q1220 310 1269 330 M1160 416 L1180 360 L1250 370 M1050 380 Q1090 370 1130 390 L1160 416 M926 450 L984 444 L1020 390 L1050 380 M926 450 Q930 510 990 516 Q1010 500 990 470 Q970 450 940 450 M1000 514 Q1060 490 1058 450 Q1040 410 1012 406 M1058 460 L1070 450 L1090 466"/>
            <rect x="1186" y="352" width="90" height="52" rx="22" transform="rotate(12 1230 378)"/>
            <path d="M1100 550 Q1090 450 1110 436 Q1150 420 1200 450 L1269 500 M1100 560 L1112 604 L1060 630 M1104 562 Q1160 570 1188 540 Q1190 500 1166 484 M1188 540 L1190 590 Q1170 630 1150 640 M1200 540 L1269 546"/>
            <path d="M30 198 L56 226 M50 220 Q60 184 94 190 Q126 220 106 250 L116 270 M0 242 Q60 220 96 270 Q110 300 106 340 L84 360 M0 300 Q40 300 50 280 Q70 310 100 320 M10 316 L24 316 M40 314 L50 312 M26 334 Q40 346 44 330 M74 370 L140 374 Q176 384 182 460 Q188 550 140 570 L16 590 M104 372 L120 526 L0 570 M120 456 L180 456 M134 574 L144 624 L0 624"/>
            <path d="M190 272 Q190 250 206 250 Q216 230 236 236 Q250 240 254 244 Q276 246 276 266 Q264 280 244 276 Q230 300 208 298 Q190 290 190 272 Z"/>
            <path d="M224 550 Q260 500 262 450 Q300 340 390 330 L366 302 Q380 300 404 318 Q440 300 480 302 Q516 310 510 340 Q480 390 440 390 Q430 440 408 442 L400 404 Q330 400 300 440 Q310 470 290 490 Q270 520 292 566 Q260 540 224 550 Z M404 318 Q420 330 420 376 Q440 390 444 360 Q460 340 456 304 M270 450 Q310 360 390 356 M440 390 L400 404 M288 446 Q300 400 370 390"/><circle cx="476" cy="357" r="2"/>
            <path d="M340 600 Q320 500 400 484 Q440 470 490 486 Q550 530 520 630 M390 626 Q350 560 380 496 M404 626 Q400 560 442 494 M430 626 Q470 560 460 500 M480 626 Q510 560 488 502 M438 494 Q430 476 450 480 L490 490 Q490 510 476 506 Z M464 480 Q470 450 502 448 Q510 460 486 466 L480 484"/>
            <circle cx="590" cy="383" r="27"/><path d="M608 404 L628 424 M540 456 Q566 466 592 456 Q584 480 592 504 Q566 496 546 508 Q552 480 540 456 Z M906 530 Q932 540 956 530 Q950 556 956 582 Q930 574 904 580 Q914 556 906 530 Z"/>
            <path d="M576 558 Q610 520 640 530 L674 514 L696 620 L670 622 L646 550 Q610 544 576 558 Z M664 596 L690 590 M716 570 L806 576 L780 590 L806 606 L740 600 L730 620 M716 570 L724 600 M740 576 L790 596 M880 630 Q910 606 960 614 L990 630"/>
            <rect x="0" y="704" width="194" height="96" rx="30" transform="rotate(6 97 752)"/>
            <path d="M130 700 Q150 686 170 706 M14 796 L20 808 L156 824 L164 808 M0 660 L10 684 M232 730 Q226 750 236 770"/>
            <path d="M18 730 Q20 718 36 720 L42 724 L38 778 Q28 786 24 774 L28 736 M86 728 L106 728 L98 778 M118 738 Q150 726 160 742 L146 754 Q166 762 156 780 Q130 790 114 776"/><circle cx="60" cy="742" r="5"/><circle cx="58" cy="768" r="5"/>
            <path d="M80 854 L84 840 L96 854 M244 854 Q250 826 270 826 M290 830 Q380 830 390 854 M440 830 L430 854 M470 830 L500 854 M540 830 L550 854 M1070 830 L1076 850 M1172 750 L1230 790 M1156 830 L1146 854 M1172 910 L1240 880 M1240 870 Q1260 850 1269 860 M1172 890 Q1200 880 1269 910 M1220 960 Q1240 970 1269 950 M1220 960 Q1220 1000 1240 1020 M1200 1054 Q1190 1070 1202 1090 Q1220 1120 1269 1120 M1200 1054 L1220 1050 L1240 1080 M1170 1130 L1204 1134 L1190 1206 L1050 1190 M1184 1130 L1174 1196 M1200 1240 L1190 1260"/>
            <path d="M140 1210 L144 1200 L170 1204 M400 1210 L430 1190 M580 1190 Q600 1210 650 1194 M520 1208 Q540 1190 560 1208 M780 1190 Q800 1218 820 1190"/>
            <circle cx="632" cy="72" r="19"/><circle cx="733" cy="118" r="12"/><circle cx="1112" cy="103" r="12"/><circle cx="90" cy="135" r="12"/><circle cx="454" cy="193" r="12"/><circle cx="393" cy="232" r="19"/><circle cx="301" cy="307" r="12"/><circle cx="154" cy="325" r="12"/><circle cx="229" cy="372" r="27"/><circle cx="215" cy="456" r="12"/><circle cx="560" cy="323" r="12"/><circle cx="530" cy="404" r="12"/><circle cx="747" cy="227" r="12"/><circle cx="1038" cy="306" r="12"/><circle cx="915" cy="401" r="19"/><circle cx="660" cy="468" r="12"/><circle cx="845" cy="562" r="12"/><circle cx="1038" cy="566" r="26"/><circle cx="200" cy="621" r="12"/><circle cx="88" cy="664" r="12"/><circle cx="1212" cy="234" r="12"/><circle cx="1178" cy="672" r="12"/><circle cx="1252" cy="606" r="18"/><circle cx="1246" cy="700" r="19"/><circle cx="22" cy="50" r="18"/><circle cx="286" cy="1202" r="12"/><circle cx="698" cy="1200" r="12"/><circle cx="1258" cy="1210" r="12"/>
        </g>
    </svg>

    <main class="chat">
        <div class="group">
            <div class="bubble in">
                <p class="text">Oie</p>
                <span class="meta"><time>23:32</time></span>
            </div>
            <div class="bubble in">
                <p class="text">Boa noite</p>
                <span class="meta"><time>23:32</time></span>
            </div>
            <div class="bubble in">
                <p class="text">Chegando agora em casa</p>
                <span class="meta"><time>23:32</time></span>
            </div>
            <div class="bubble in stacked">
                <p class="text">Fizemos 61k de particular hj</p>
                <span class="meta">Editada <time>23:32</time></span>
            </div>
            <div class="bubble in">
                <p class="text">Deus é muito bom mesmo</p>
                <span class="meta"><time>23:32</time></span>
                <svg class="tail" aria-hidden="true"><use href="#tail"/></svg>
            </div>
        </div>

        <div class="group">
            <div class="bubble out multiline">
                <p class="text">Eita <svg class="emoji" role="img" aria-label="mãos para cima"><use href="#hands"/></svg> assim vai precisar atender<br>Sábado rs</p>
                <span class="meta"><time>23:33</time><svg class="ticks" aria-hidden="true"><use href="#ticks"/></svg></span>
            </div>
            <div class="bubble out">
                <p class="text">Glória a Deus</p>
                <span class="meta"><time>23:33</time><svg class="ticks" aria-hidden="true"><use href="#ticks"/></svg></span>
            </div>
            <div class="bubble out stacked with-quote">
                <blockquote class="quote">
                    <div class="quote-name">
                        <span>D</span>
                        <span>a...</span>
                        <svg class="scribble" viewBox="0 0 550 44" preserveAspectRatio="none" aria-hidden="true">
                            <path d="M4 4 Q6 2 30 3 L70 9 Q180 15 270 10 L520 10 L541 12 Q546 14 544 33 L538 35 L400 33 L10 36 Q2 34 4 4 Z" fill="#c3d8ca"/>
                            <path d="M8 20 Q60 8 180 10 L350 6 L430 2 L526 3 Q532 6 531 15 L532 27 Q530 33 510 33 L320 35 L160 41 L16 41 Q5 38 6 30 Z" fill="#fff"/>
                        </svg>
                    </div>
                    <p class="quote-text">Fizemos 61k de particular hj</p>
                </blockquote>
                <p class="text">Esse mês bate 200 de faturamento</p>
                <span class="meta"><time>23:34</time><svg class="ticks" aria-hidden="true"><use href="#ticks"/></svg></span>
                <svg class="tail" aria-hidden="true"><use href="#tail"/></svg>
            </div>
        </div>

        <div class="group">
            <div class="bubble in">
                <p class="text">Acho que passa</p>
                <span class="meta"><time>23:34</time></span>
            </div>
            <div class="bubble in">
                <p class="text">Já estamos em 180</p>
                <span class="meta"><time>23:34</time></span>
                <svg class="tail" aria-hidden="true"><use href="#tail"/></svg>
            </div>
        </div>

        <div class="group">
            <div class="bubble out">
                <p class="text">Ai sim <svg class="emoji" role="img" aria-label="mãos para cima"><use href="#hands"/></svg></p>
                <span class="meta"><time>23:35</time><svg class="ticks" aria-hidden="true"><use href="#ticks"/></svg></span>
            </div>
            <div class="bubble out multiline">
                <p class="text">Manter esse ritmo, começar a fazer<br>caixa pra cresce a empresa</p>
                <span class="meta"><time>23:35</time><svg class="ticks" aria-hidden="true"><use href="#ticks"/></svg></span>
            </div>
            <div class="bubble out next"></div>
        </div>
    </main>

    <div class="scrollbar"></div>

</body>
</html>
```
FILE: styles.css
```css
* {
    box-sizing: border-box;
}
body {
    margin: 0;
    height: 100vh;
    overflow: hidden;
    position: relative;
    background-color: #020202;
    font-family: Inter, "Liberation Sans", sans-serif;
}
p, blockquote {
    margin: 0;
}
.defs {
    position: absolute;
    width: 0;
    height: 0;
}
.wallpaper {
    position: absolute;
    top: 0;
    left: 0;
    width: 100%;
    height: 100%;
    fill: none;
    stroke: #242424;
    stroke-width: 5;
    stroke-linecap: round;
    stroke-linejoin: round;
}
.chat {
    position: relative;
    display: flex;
    flex-direction: column;
    gap: 26px;
    height: 100%;
    padding: 25px 33px 0;
    overflow: hidden;
}
.group {
    display: flex;
    flex-direction: column;
    flex-shrink: 0;
    gap: 9px;
}

/* bubbles */
.bubble {
    position: relative;
    display: flex;
    align-items: flex-end;
    justify-content: space-between;
    gap: 24px;
    padding: 11px 19px 12px;
    border-radius: 24px;
}
.in {
    align-self: flex-start;
    background-color: #242527;
    color: #242527;
}
.out {
    align-self: flex-end;
    background-color: #005f38;
    color: #005f38;
}
.text {
    font-size: 32px;
    line-height: 44px;
    color: #fafafa;
    white-space: nowrap;
}
.out .text {
    color: #e2fdec;
}
.meta {
    display: flex;
    align-items: center;
    gap: 7px;
    margin-bottom: -3px;
    font-size: 24px;
    line-height: 28px;
    color: #b2b3b4;
    white-space: nowrap;
}
.out .meta {
    color: #aadcc0;
}
.stacked {
    flex-direction: column;
    gap: 8px;
}
.stacked .text {
    align-self: flex-start;
}
.multiline {
    display: grid;
    padding-bottom: 11px;
}
.multiline .text,
.multiline .meta {
    grid-area: 1 / 1;
}
.multiline .text {
    padding-right: 10px;
}
.multiline .meta {
    justify-self: end;
    margin-bottom: -1px;
}
.next {
    width: 67%;
    height: 67px;
}
.tail {
    position: absolute;
    left: -11px;
    bottom: 0;
    width: 24px;
    height: 26px;
}
.out .tail {
    left: auto;
    right: -11px;
    transform: scaleX(-1);
}
.ticks {
    width: 30px;
    height: 20px;
}
.emoji {
    width: 42px;
    height: 42px;
    margin: -8px 0;
    vertical-align: 0;
}

/* quoted message */
.with-quote {
    width: 82%;
    padding-top: 6px;
    padding-bottom: 13px;
}
.quote {
    align-self: stretch;
    margin: 0 -13px 2px;
    padding: 18px 18px 18px 27px;
    border-radius: 15px;
    background: linear-gradient(to right, #68c5fb 8px, #004629 8px);
}
.quote-name {
    position: relative;
    display: flex;
    justify-content: space-between;
    padding-right: 16px;
    font-size: 28px;
    font-weight: 500;
    line-height: 41px;
    color: #68c5fb;
}
.scribble {
    position: absolute;
    left: 8px;
    top: 0;
    width: 93%;
    height: 44px;
}
.quote-text {
    font-size: 25px;
    line-height: 41px;
    color: #c8ecd5;
}

/* scroll position */
.scrollbar {
    position: absolute;
    right: 6px;
    top: 733px;
    bottom: 0;
    width: 6px;
    border-radius: 3px 3px 0 0;
    background-color: #a6a6a6;
}
```
